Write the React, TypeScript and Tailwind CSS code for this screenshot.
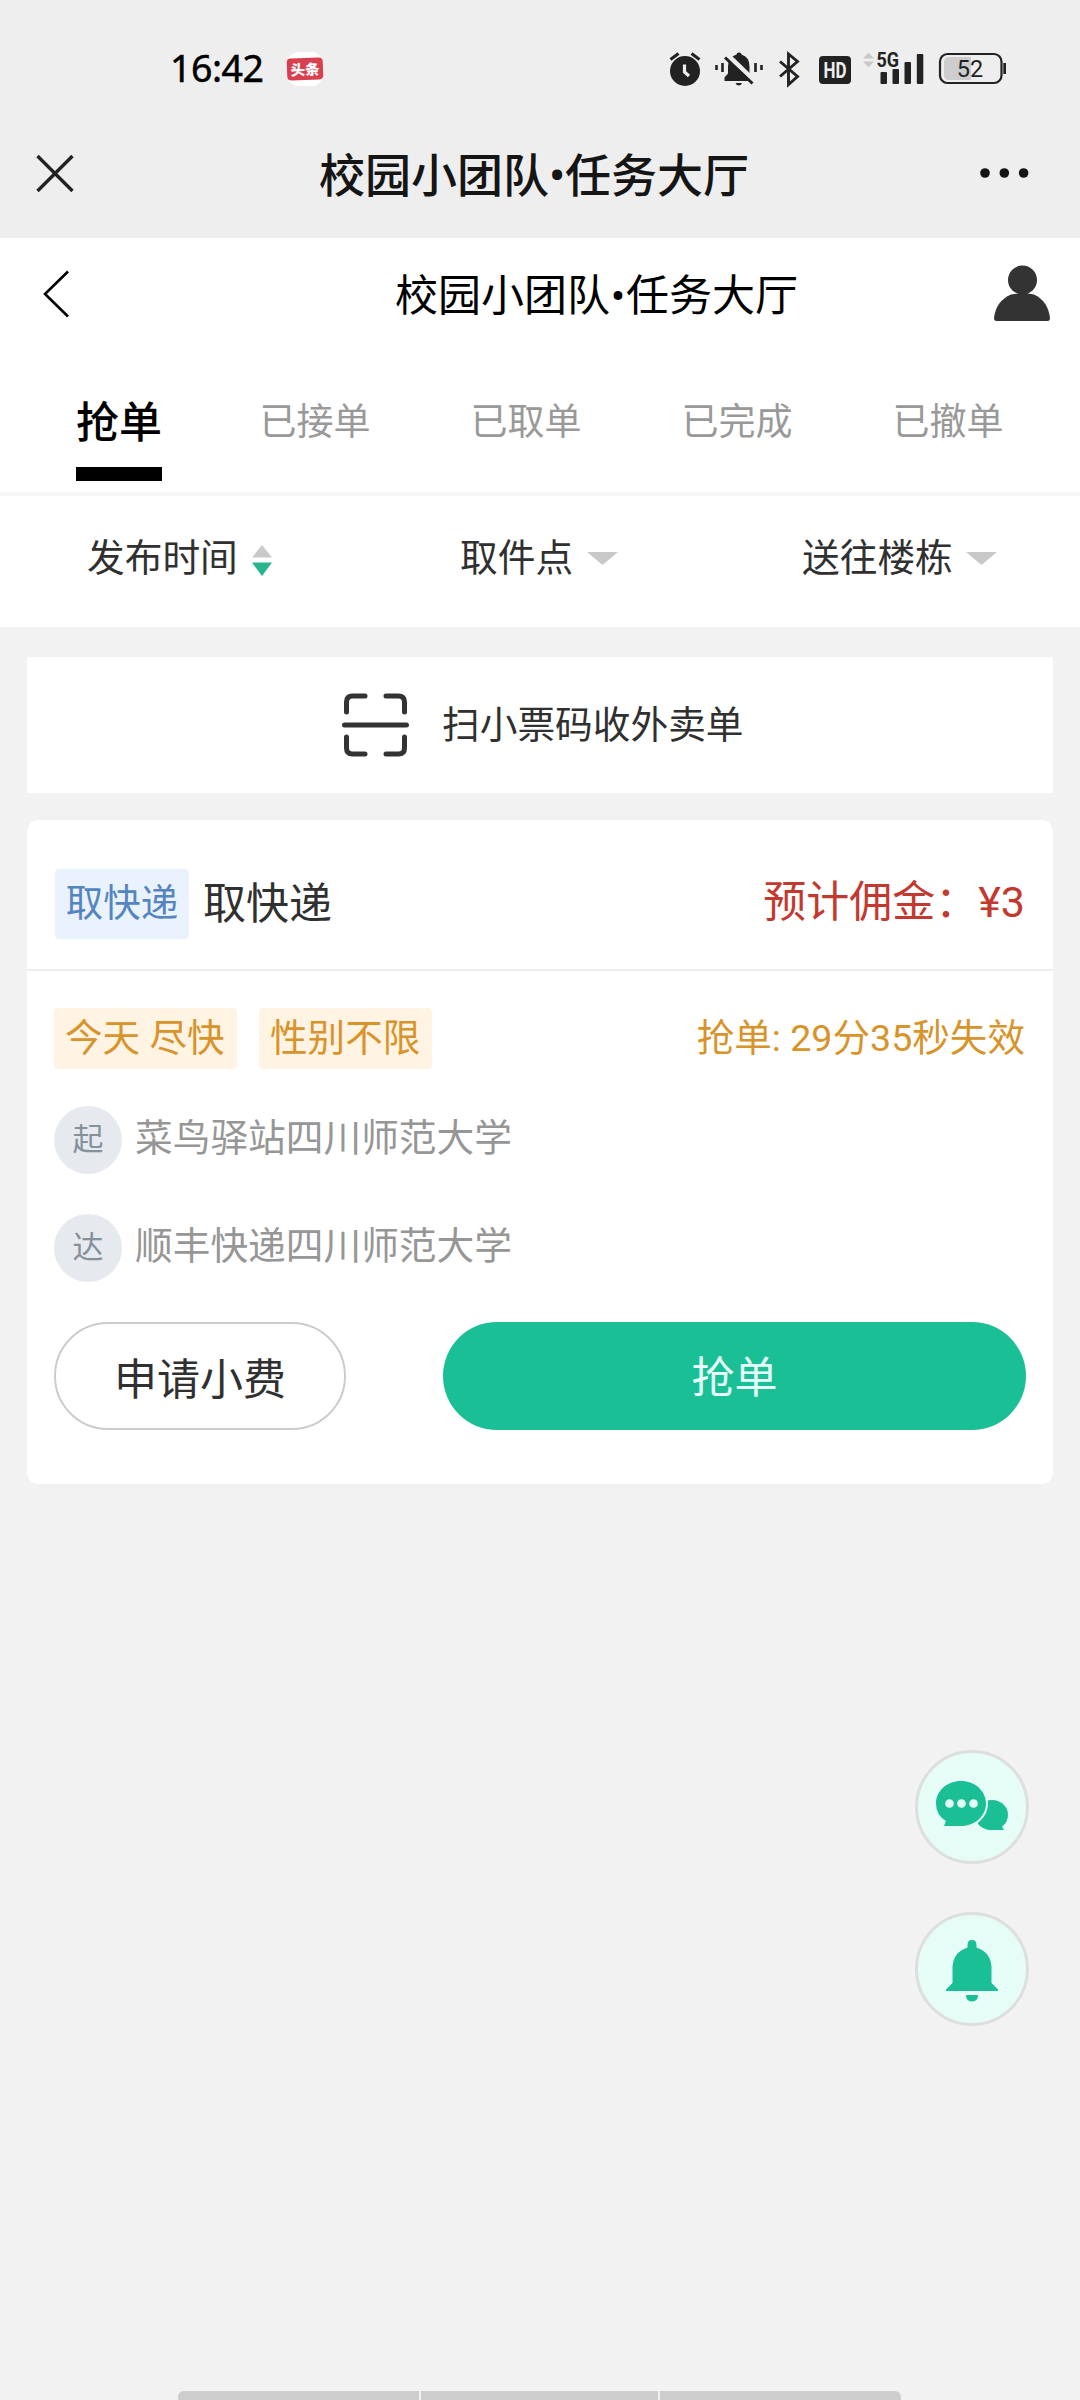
import React from "react";

function Dotted({ left, right }: { left: string; right: string }) {
  return (
    <>
      <span>{left}</span>
      <span className="w-4 text-center">•</span>
      <span>{right}</span>
    </>
  );
}

function StatusIcons() {
  return (
    <svg className="mt-[36px] ml-[345px] h-[60px] w-[342px]" viewBox="668 36 342 60" fill="none">
      {/* alarm */}
      <circle cx="685" cy="71" r="15" fill="#222" />
      <path d="M670.5 59.5l8-6M691.500 53.500l8 6" stroke="#222" strokeWidth="3" />
      <path d="M684.500 64.500v7.500l4.500 4" stroke="#eee" strokeWidth="3.200" />
      {/* muted bell */}
      <path d="M736.500 54.500q0-2 2.500-2t2.500 2q8 2.500 8 12v7l3.500 4v3.500h-28.500v-3.500l3.500-4v-7q0-9.500 8.500-12z" fill="#222" />
      <path d="M735.500 83h6.500q-1 2.500-3.200 2.500t-3.300-2.500z" fill="#222" />
      <path d="M727 54.500l29 28" stroke="#eee" strokeWidth="5" />
      <path d="M725 57.500l27.500 26" stroke="#222" strokeWidth="3" />
      <path d="M716.500 65v5M722.500 63v9M755.500 63v9M761.500 65v5" stroke="#222" strokeWidth="2.600" />
      {/* bluetooth */}
      <path d="M780 61.500l17.500 15-9 8V54l9 7.500-17.500 15" stroke="#222" strokeWidth="2.900" />
      {/* HD */}
      <rect x="819" y="56" width="32" height="28" rx="4" fill="#222" />
      <text x="835" y="78" textAnchor="middle" textLength="23" lengthAdjust="spacingAndGlyphs" fontFamily="Roboto" fontWeight="700" fontSize="21.500" fill="#eee">HD</text>
      {/* signal */}
      <path d="M863 58.500l5.500-6 5.500 6zM863 61.500l5.500 6 5.500-6z" fill="#c8c8c8" />
      <text x="876.500" y="67" textLength="22.500" lengthAdjust="spacingAndGlyphs" fontFamily="Roboto" fontWeight="700" fontSize="20.500" fill="#222">5G</text>
      <g fill="#222">
        <rect x="880.500" y="72" width="6.500" height="12" rx="1" />
        <rect x="892.500" y="69" width="6.500" height="15" rx="1" />
        <rect x="904.500" y="62" width="6.500" height="22" rx="1" />
        <rect x="916.800" y="54" width="6.500" height="30" rx="1" />
      </g>
      {/* battery */}
      <path d="M949 57h22v23h-22q-5 0-5-5v-13q0-5 5-5z" fill="#cdcdcd" />
      <rect x="940" y="54" width="61.500" height="29" rx="7.500" stroke="#222" strokeWidth="2.200" />
      <rect x="1003.300" y="63" width="2.700" height="11" fill="#222" />
      <text x="970" y="77" textAnchor="middle" fontFamily="Roboto" fontSize="23.500" fill="#222">52</text>
    </svg>
  );
}

function StatusBar() {
  return (
    <div className="flex h-[110px]">
      <div className="ml-[170px] w-[98px] pt-[48px] font-['Noto_Sans'] text-[37.500px] leading-10 tracking-[-0.5px] text-black [-webkit-text-stroke:0.5px_black]">16:42</div>
      <div className="mt-[52px] ml-[19px] flex h-[34px] w-9 items-center rounded-xl bg-white">
        <div className="h-[22px] w-9 -rotate-2 rounded-sm bg-[#d9404f] text-center font-['Noto_Sans_CJK_SC'] text-[14.500px] leading-[22px] font-black text-white">头条</div>
      </div>
      <StatusIcons />
    </div>
  );
}

function Down() {
  return (
    <svg className="h-[13px] w-[31px]" viewBox="0 0 31 13">
      <path d="M0 0h31L15.500 13z" fill="#c9c9c9" />
    </svg>
  );
}

const tabs = ["已接单", "已取单", "已完成", "已撤单"];

function Stop({ mark, name }: { mark: string; name: string }) {
  return (
    <div className="flex h-[68px] items-center">
      <span className="flex size-[68px] items-center justify-center rounded-full bg-[#e6eaee] text-[31px] text-[#84919b]">{mark}</span>
      <span className="-mt-1 ml-[13px] text-[37.700px] leading-[44px] text-[#969696]">{name}</span>
    </div>
  );
}

export default function App() {
  return (
    <div className="relative flex h-[2400px] w-[1080px] flex-col overflow-hidden bg-[#f2f2f2] font-[Roboto,'Noto_Sans_CJK_SC',sans-serif] text-[#303030]">
      <header className="h-[238px] bg-[#eee]">
        <StatusBar />
        <div className="flex h-[128px] items-center">
          <svg className="-mt-0.5 ml-9 h-10 w-[38px]" viewBox="0 0 38 40" stroke="#222" strokeWidth="3.400">
            <path d="M1.500 3l35 35M36.500 3l-35 35" />
          </svg>
          <h1 className="mt-[3px] ml-[245px] flex text-[46px] leading-[54px] font-medium text-[#151515]">
            <Dotted left="校园小团队" right="任务大厅" />
          </h1>
          <svg className="-mt-0.5 ml-[230px] h-10 w-[50px]" viewBox="0 0 50 40" fill="#151515">
            <circle cx="6" cy="20" r="4.800" />
            <circle cx="25.300" cy="20" r="4.800" />
            <circle cx="44.600" cy="20" r="4.800" />
          </svg>
        </div>
      </header>

      <div className="flex h-[114px] items-center bg-white">
        <svg className="-mt-0.5 ml-[43px] h-[48px] w-[26px]" viewBox="0 0 26 48" fill="none" stroke="#000" strokeWidth="2.600">
          <path d="M25 1.500L2 24l23 22.500" />
        </svg>
        <h2 className="mt-0.5 ml-[326px] flex text-[43px] leading-[50px] text-black">
          <Dotted left="校园小团队" right="任务大厅" />
        </h2>
        <svg className="-mt-1 ml-[195px] h-14 w-[57px]" viewBox="0 0 57 56" fill="#333">
          <circle cx="29.500" cy="15" r="14.500" />
          <path d="M1 53Q3 36 18 29.500Q29 27 41 29.500Q55 36 57 53Q57 56 54.500 56H3.500Q1 56 1 53z" />
        </svg>
      </div>

      <nav className="flex h-[144px] gap-[99px] border-b-4 border-[#f7f7f7] bg-white pl-[76px]">
        <div className="mr-[-2px] flex w-[86px] flex-col items-center">
          <span className="mt-[46px] text-[43px] leading-[50px] font-medium text-black">抢单</span>
          <span className="mt-[19px] h-[14px] w-full bg-black" />
        </div>
        {tabs.map((t) => (
          <span key={t} className="mt-[48px] w-[112px] text-center text-[37px] leading-[46px] text-[#999]">{t}</span>
        ))}
      </nav>

      <div className="flex h-[131px] items-start bg-white pt-[39px] text-[37.700px] leading-[46px]">
        <div className="ml-[87px] flex w-[373px] items-center">
          发布时间
          <svg className="mt-1 ml-[14px] h-[31px] w-5" viewBox="0 0 20 31">
            <path d="M10 0l10 12.500H0z" fill="#c9c9c9" />
            <path d="M0 17.500h20L10 31z" fill="#28b48c" />
          </svg>
        </div>
        <div className="flex w-[342px] items-center gap-[14px]">
          取件点
          <Down />
        </div>
        <div className="flex items-center gap-[13px]">
          送往楼栋
          <Down />
        </div>
      </div>

      <main className="mx-[27px] mt-[30px]">
        <div className="flex h-[136px] items-center bg-white">
          <svg className="ml-[315px] h-[64px] w-[67px]" viewBox="0 0 67 64" fill="none" stroke="#333" strokeWidth="5" strokeLinecap="round" strokeLinejoin="round">
            <path d="M4.500 19V9q0-6 6-6H23M44 3h12.500q6 0 6 6v10M62.500 44v11q0 6-6 6H44M23 61H10.500q-6 0-6-6V44M2.500 32h62" />
          </svg>
          <span className="ml-[33px] text-[37.700px] leading-[46px]">扫小票码收外卖单</span>
        </div>

        <section className="mt-[27px] h-[664px] rounded-xl bg-white">
          <div className="flex h-[151px] items-center border-b-2 border-[#eee] px-7">
            <span className="mt-[18px] flex h-[70px] w-[134px] items-center justify-center rounded bg-[#eaf2fd] text-[37.500px] text-[#5585c0]">取快递</span>
            <span className="mt-[18px] pl-[14px] text-[43px] leading-[50px]">取快递</span>
            <span className="mt-[14px] ml-auto text-[43px] leading-[50px] text-[#c4392f]">预计佣金：¥3</span>
          </div>
          <div className="flex items-center pt-9 pr-7 pl-[27px] text-[37.600px] text-[#d8942a]">
            <span className="h-[61px] w-[183px] rounded bg-[#fff3e4] pl-[11px] leading-[60px]">今天 尽快</span>
            <span className="ml-[22px] h-[61px] w-[173px] rounded bg-[#fff3e4] pl-[11px] leading-[60px]">性别不限</span>
            <span className="ml-auto leading-[63px]">抢单: 29分35秒失效</span>
          </div>
          <div className="mt-[36px] flex flex-col gap-10 px-[27px]">
            <Stop mark="起" name="菜鸟驿站四川师范大学" />
            <Stop mark="达" name="顺丰快递四川师范大学" />
          </div>
          <div className="mt-10 flex justify-between px-[27px] text-[43px]">
            <button className="h-[108px] w-[292px] rounded-full border-2 border-[#ccc] pt-1.5 leading-[100px]">申请小费</button>
            <button className="h-[108px] w-[583px] rounded-full bg-[#1bbf95] pt-0.5 leading-[108px] text-[#e6fffa]">抢单</button>
          </div>
        </section>
      </main>

      <aside className="absolute top-[1750px] right-[51px] flex flex-col gap-12">
        <div className="size-[114px] rounded-full border-3 border-[#dcdfde] bg-[#e6fcf6]">
          <svg className="size-[108px]" viewBox="918 1753 108 108" fill="#1bbf95">
            <path d="M978 1824c4 4 8 6 14 6h12l-2-3.500q6-4 6-12c0-8-7-14.500-16-14.500s-15 6-15 14z" />
            <path d="M944 1826l2-5q-10-6-10-17.500c0-12.500 11-22.500 25-22.500s25 10 25 22.500-11 22.500-25 22.500z" stroke="#e6fcf6" strokeWidth="4" paintOrder="stroke" />
            <g fill="#e6fcf6">
              <circle cx="949.500" cy="1803.500" r="4.300" />
              <circle cx="961.500" cy="1803.500" r="4.300" />
              <circle cx="973.500" cy="1803.500" r="4.300" />
            </g>
          </svg>
        </div>
        <div className="size-[114px] rounded-full border-3 border-[#dcdfde] bg-[#e6fcf6]">
          <svg className="size-[108px]" viewBox="918 1915 108 108" fill="#1bbf95">
            <path d="M967.500 1945q0-5 4.500-5t4.500 5v2.500q15 5 15 21v14.500l6.500 6.500v1.500h-52v-1.500l6.500-6.500v-14.500q0-16 15-21z" />
            <path d="M966 1995h12q0 6.500-6 6.500t-6-6.500z" />
          </svg>
        </div>
      </aside>

      <footer className="mt-auto ml-[178px] flex h-[9px] w-[723px] gap-0.5 overflow-hidden rounded-t-md">
        <span className="w-[241px] bg-[#cdcdcd]" />
        <span className="w-[237px] bg-[#cdcdcd]" />
        <span className="flex-1 bg-[#cdcdcd]" />
      </footer>
    </div>
  );
}
